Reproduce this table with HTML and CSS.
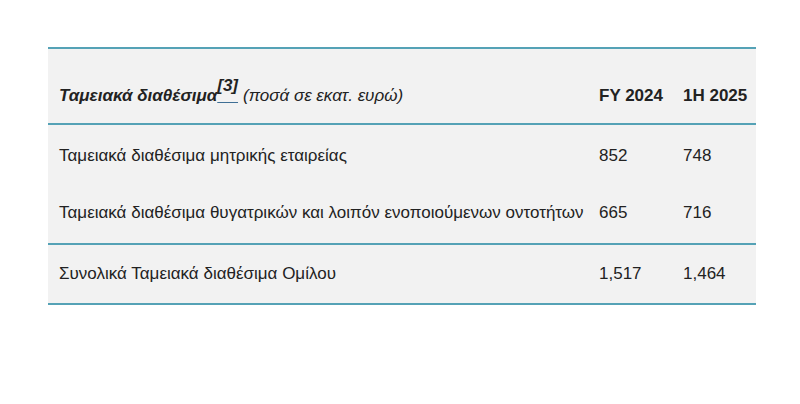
FILE: index.html
```html
<!DOCTYPE html>
<html lang="el">
<head>
<meta charset="utf-8">
<link rel="stylesheet" href="styles.css">
</head>
<body>
<div class="page">
  <table class="cash">
    <colgroup>
      <col class="c-label">
      <col class="c-fy">
      <col class="c-h">
    </colgroup>
    <thead>
      <tr class="head">
        <th class="label"><span class="title">Ταμειακά διαθέσιμα</span><a class="ref"><sup>[3]</sup></a> <span class="unit">(ποσά σε εκατ. ευρώ)</span></th>
        <th class="num">FY 2024</th>
        <th class="num">1H 2025</th>
      </tr>
    </thead>
    <tbody>
      <tr class="r1">
        <td class="label">Ταμειακά διαθέσιμα μητρικής εταιρείας</td>
        <td class="num">852</td>
        <td class="num">748</td>
      </tr>
      <tr class="r2">
        <td class="label">Ταμειακά διαθέσιμα θυγατρικών και λοιπόν ενοποιούμενων οντοτήτων</td>
        <td class="num">665</td>
        <td class="num">716</td>
      </tr>
      <tr class="total">
        <td class="label">Συνολικά Ταμειακά διαθέσιμα Ομίλου</td>
        <td class="num">1,517</td>
        <td class="num">1,464</td>
      </tr>
    </tbody>
  </table>
</div>
</body>
</html>
```

FILE: styles.css
```css
html, body {
  margin: 0;
  padding: 0;
  background: #ffffff;
}
.page {
  padding: 47px 44px 0 48px;
}
.cash {
  width: 708px;
  table-layout: fixed;
  border-collapse: collapse;
  background: #f2f2f2;
  font-family: "Liberation Sans", Arial, sans-serif;
  font-size: 17px;
  color: #222222;
  border-top: 2px solid #55a2b6;
  border-bottom: 2px solid #55a2b6;
}
.c-label { width: 551px; }
.c-fy { width: 84px; }
.c-h { width: 73px; }
.cash th, .cash td {
  padding: 0;
  text-align: left;
  vertical-align: middle;
  white-space: nowrap;
}
.cash .label {
  padding-left: 11px;
}
.head {
  height: 76px;
  border-bottom: 2px solid #55a2b6;
}
.head th {
  padding-top: 20px;
  font-weight: bold;
}
.title {
  font-style: italic;
  font-weight: bold;
}
.ref {
  text-decoration: underline;
  text-decoration-color: #3f6f95;
  display: inline-block;
  width: 21px;
  color: #222;
}
.ref sup {
  font-style: italic;
  font-weight: bold;
  font-size: 17px;
  vertical-align: baseline;
  position: relative;
  top: -10px;
}
.unit {
  font-style: italic;
  font-weight: normal;
  font-size: 17px;
}
.r1 {
  height: 60px;
}
.r1 td {
  padding-top: 2px;
}
.r2 {
  height: 60px;
  border-bottom: 2px solid #55a2b6;
}
.r2 td {
  padding-bottom: 2px;
}
.total {
  height: 60px;
}
```
